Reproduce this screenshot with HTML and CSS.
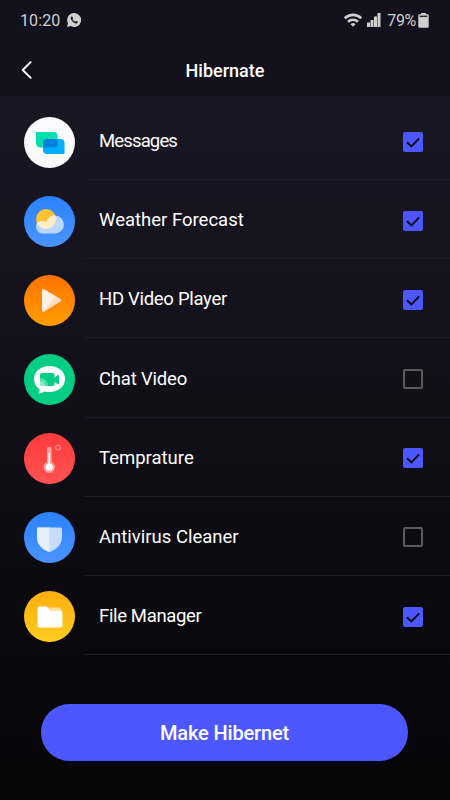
FILE: index.html
```
<!DOCTYPE html>
<html lang="en">
<head>
    <meta charset="UTF-8">
    <meta name="viewport" content="width=device-width, initial-scale=1.0">
    <title>Hibernate</title>
    <link rel="stylesheet" href="styles.css">
</head>
<body>
    <div class="status-bar">
        <span class="time">10:20</span>
        <svg class="chat-status" width="14" height="14" viewBox="0 0 14 14">
            <path d="M7 0a7 7 0 1 1-3.3 13.1L0 14l1-3.7A7 7 0 0 1 7 0z" fill="#cfcfcf"/>
            <path d="M4.400 3.400c-1 .8-.9 2.100 0 3.500 1.200 1.900 2.700 3.200 4.500 3.500 1 .1 1.900-.6 1.900-1.600L9 7.900l-.9.900C6.900 8.300 6 7.400 5.400 6.200l.7-.9-.8-1.900z" fill="#13111c"/>
        </svg>
        <svg class="wifi" width="18" height="14" viewBox="0 0 18 14">
            <g fill="none" stroke="#cfcfcf" stroke-width="2.600">
                <path d="M.8 5.200a11.700 11.700 0 0 1 16.400 0"/>
                <path d="M4 8.700a7.200 7.200 0 0 1 10 0"/>
            </g>
            <path d="M6.500 11.200a3.600 3.600 0 0 1 5 0L9 13.700z" fill="#cfcfcf"/>
        </svg>
        <svg class="signal" width="14" height="14" viewBox="0 0 14 14" fill="#cfcfcf">
            <path d="M0 9.500h3V14H0zM3.500 7h3v7h-3zM7 3.500h3V14H7zM10.500 0h3v14h-3z"/>
        </svg>
        <span class="percent">79%</span>
        <svg class="battery" width="11" height="15" viewBox="0 0 11 15">
            <path d="M3 0h5v1.300h1.500q1.200 0 1.200 1.200v11q0 1.200-1.200 1.200h-8Q.3 14.700.3 13.500v-11q0-1.200 1.200-1.200H3z" fill="#cfcfcf"/>
            <path d="M1.700 2.600h7.600v1.500H1.700z" fill="#2a2831"/>
        </svg>
    </div>

    <header class="header">
        <svg class="back" width="12" height="18" viewBox="0 0 12 18">
            <path d="M9.700 1.200L1.700 9l8 7.900" fill="none" stroke="#fff" stroke-width="1.800" stroke-linecap="round" stroke-linejoin="round"/>
        </svg>
        <h1 class="title">Hibernate</h1>
    </header>

    <main class="content">
        <ul class="app-list">
            <li class="app">
                <svg class="app-icon" viewBox="0 0 51 51">
                    <circle cx="25.500" cy="25.500" r="25.500" fill="#fbfbfd"/>
                    <path d="M13 15h16.500a4 4 0 0 1 4 4v11.500H16.500a4.500 4.500 0 0 1-4.500-4.500V16a1 1 0 0 1 1-1z" fill="#00dfad"/>
                    <path d="M23 22h13.500a4 4 0 0 1 4 4v10a1 1 0 0 1-1 1H23a4 4 0 0 1-4-4v-7a4 4 0 0 1 4-4z" fill="#00adff"/>
                    <path d="M23 22h10.500v4.500a4 4 0 0 1-4 4H19V26a4 4 0 0 1 4-4z" fill="#0080d9"/>
                </svg>
                <div class="app-row">
                    <span class="app-name name-messages">Messages</span>
                    <span class="check checked"><svg viewBox="0 0 20 20"><path d="M4 10.200l4.400 4.200 7.800-8"/></svg></span>
                </div>
            </li>
            <li class="app">
                <svg class="app-icon" viewBox="0 0 51 51">
                    <defs>
                        <linearGradient id="blue" x1="0" y1="0" x2="0" y2="1">
                            <stop offset="0" stop-color="#2b82ff"/>
                            <stop offset="1" stop-color="#4a94ff"/>
                        </linearGradient>
                        <clipPath id="sun"><circle cx="22" cy="23" r="10"/></clipPath>
                    </defs>
                    <circle cx="25.500" cy="25.500" r="25.500" fill="url(#blue)"/>
                    <circle cx="22" cy="23" r="10" fill="#ffc233"/>
                    <path d="M18.500 37.500a6.500 6.500 0 0 1-6.500-6.500c0-4 2.500-6 6.500-6 2 0 3.200.6 4.200.9 1.800-4.500 4.500-6.400 8.300-6.400a9 9 0 0 1 0 18z" fill="#bad7ff"/>
                    <path d="M18.500 37.500a6.500 6.500 0 0 1-6.500-6.500c0-4 2.500-6 6.500-6 2 0 3.200.6 4.200.9 1.800-4.500 4.500-6.400 8.300-6.400a9 9 0 0 1 0 18z" fill="#ffeec5" clip-path="url(#sun)"/>
                </svg>
                <div class="app-row">
                    <span class="app-name name-weather">Weather Forecast</span>
                    <span class="check checked"><svg viewBox="0 0 20 20"><path d="M4 10.200l4.400 4.200 7.800-8"/></svg></span>
                </div>
            </li>
            <li class="app">
                <svg class="app-icon" viewBox="0 0 51 51">
                    <defs>
                        <linearGradient id="orange" x1="0" y1="0" x2="0" y2="1">
                            <stop offset="0" stop-color="#ff7300"/>
                            <stop offset="1" stop-color="#ff9d00"/>
                        </linearGradient>
                    </defs>
                    <circle cx="25.500" cy="25.500" r="25.500" fill="url(#orange)"/>
                    <path d="M18 16.200q0-3 2.700-1.500l15.600 9.100q2.300 1.500 0 3L20.700 36.200Q18 37.700 18 34.700z" fill="#ffdbbd"/>
                    <path d="M18 16.200q0-3 2.700-1.500l10.700 6.300L20 36.500q-2 .8-2-1.800z" fill="#fff0e6"/>
                </svg>
                <div class="app-row">
                    <span class="app-name name-player">HD Video Player</span>
                    <span class="check checked"><svg viewBox="0 0 20 20"><path d="M4 10.200l4.400 4.200 7.800-8"/></svg></span>
                </div>
            </li>
            <li class="app">
                <svg class="app-icon" viewBox="0 0 51 51">
                    <defs>
                        <clipPath id="camera"><rect x="16" y="19" width="14.500" height="13" rx="1.800"/></clipPath>
                    </defs>
                    <circle cx="25.500" cy="25.500" r="25.500" fill="#04ce84"/>
                    <path d="M25.500 12C34.500 12 41 17.500 41 25s-6.500 13-15.500 13c-1.900 0-3.600-.2-5.100-.6-1.800 1.300-3.600 2-5.900 2 .8-1.300 1.200-2.700 1-4.200C12 32.900 10 29.500 10 25c0-7.500 6.500-13 15.500-13z" fill="#fff"/>
                    <rect x="16" y="19" width="14.500" height="13" rx="1.800" fill="#04ce84"/>
                    <path d="M30 24l3.500-2.800q1.500-.8 1.500.6v7.700q0 1.300-1.500.5L30 27.500z" fill="#04ce84"/>
                    <g clip-path="url(#camera)" fill="#fff">
                        <circle cx="16" cy="32" r="8" opacity=".3"/>
                        <circle cx="16" cy="32" r="5" opacity=".35"/>
                    </g>
                </svg>
                <div class="app-row">
                    <span class="app-name name-chat">Chat Video</span>
                    <span class="check"></span>
                </div>
            </li>
            <li class="app">
                <svg class="app-icon" viewBox="0 0 51 51">
                    <defs>
                        <linearGradient id="red" x1="0" y1="0" x2="0" y2="1">
                            <stop offset="0" stop-color="#ff3b3b"/>
                            <stop offset="1" stop-color="#ff5252"/>
                        </linearGradient>
                    </defs>
                    <circle cx="25.500" cy="25.500" r="25.500" fill="url(#red)"/>
                    <path d="M23 16a2.300 2.300 0 0 1 4.600 0v13a5.700 5.700 0 1 1-4.600 0z" fill="#ffa1a1"/>
                    <path d="M24.500 20.500q.8-.9 1.600 0V31h-1.600z" fill="#fff"/>
                    <circle cx="25.300" cy="34" r="3.500" fill="#fff"/>
                    <circle cx="34" cy="14.700" r="2.400" fill="none" stroke="#ffa1a1" stroke-width="1"/>
                </svg>
                <div class="app-row">
                    <span class="app-name name-temp">Temprature</span>
                    <span class="check checked"><svg viewBox="0 0 20 20"><path d="M4 10.200l4.400 4.200 7.800-8"/></svg></span>
                </div>
            </li>
            <li class="app">
                <svg class="app-icon" viewBox="0 0 51 51">
                    <circle cx="25.500" cy="25.500" r="25.500" fill="url(#blue)"/>
                    <path d="M14 15.500h22.500q1.500 0 1.500 1.500v8c0 7.500-5.500 12.500-12.700 15C18.500 37.500 13 32.500 13 25v-8.500q0-1 1-1z" fill="#c6ddff"/>
                    <path d="M14 15.500h11.300V40C18.500 37.500 13 32.500 13 25v-8.500q0-1 1-1z" fill="#e6f0ff"/>
                </svg>
                <div class="app-row">
                    <span class="app-name name-antivirus">Antivirus Cleaner</span>
                    <span class="check"></span>
                </div>
            </li>
            <li class="app">
                <svg class="app-icon" viewBox="0 0 51 51">
                    <defs>
                        <linearGradient id="yellow" x1="0" y1="0" x2="0" y2="1">
                            <stop offset="0" stop-color="#ffae0d"/>
                            <stop offset="1" stop-color="#ffcd20"/>
                        </linearGradient>
                    </defs>
                    <circle cx="25.500" cy="25.500" r="25.500" fill="url(#yellow)"/>
                    <path d="M22 16.500h13.500q1.700 0 1.700 1.700V23H22z" fill="#ffdf94"/>
                    <path d="M15.500 15.500h6.700q.8 0 1.300.7l2.300 3.500h10.700q2 0 2 2v12.800q0 2-2 2h-21q-2 0-2-2v-17q0-2 2-2z" fill="#fff"/>
                </svg>
                <div class="app-row">
                    <span class="app-name name-file">File Manager</span>
                    <span class="check checked"><svg viewBox="0 0 20 20"><path d="M4 10.200l4.400 4.200 7.800-8"/></svg></span>
                </div>
            </li>
        </ul>
        <button class="hibernate-btn">Make Hibernet</button>
    </main>
</body>
</html>
```
FILE: styles.css
```
* {
    box-sizing: border-box;
}
body {
    margin: 0;
    height: 800px;
    overflow: hidden;
    background-color: #070709;
    color: #fff;
    font-family: Roboto, "Liberation Sans", sans-serif;
}
.status-bar {
    display: flex;
    align-items: center;
    height: 40px;
    padding: 0 20px;
    background-color: #13111c;
    color: #cfcfcf;
    font-size: 16px;
}
.time {
    letter-spacing: 0.1px;
}
.chat-status {
    margin-left: 7px;
}
.wifi {
    margin-left: auto;
}
.signal {
    margin-left: 5px;
}
.percent {
    margin-left: 6px;
    letter-spacing: -0.3px;
}
.battery {
    margin-left: 2px;
    margin-right: 1px;
}
.header {
    display: grid;
    grid-template-columns: 24px 1fr 24px;
    align-items: center;
    height: 56px;
    padding: 4px 21px 0 21px;
    background-color: #13111c;
}
.title {
    margin: 0;
    text-align: center;
    font-size: 18px;
    font-weight: 500;
}
.content {
    height: 704px;
    padding-top: 5px;
    background: linear-gradient(#1a1725, #13111b 35%, #0a0a0f 70%, #060607);
}
.app-list {
    list-style: none;
    margin: 0;
    padding: 0;
}
.app {
    display: flex;
    height: 79.17px;
    padding-left: 24px;
}
.app-icon {
    width: 51px;
    height: 51px;
    margin-top: 15.5px;
    margin-right: 9px;
    flex-shrink: 0;
}
.app-row {
    display: flex;
    flex: 1;
    align-items: center;
    justify-content: space-between;
    padding: 3px 27px 0 15px;
    border-bottom: 1px solid #1e1c2b;
}
.app-name {
    font-size: 18.5px;
    line-height: 24px;
    padding-bottom: 1px;
}
.name-messages {
    letter-spacing: -0.85px;
}
.name-player {
    letter-spacing: -0.3px;
}
.name-chat {
    letter-spacing: -0.2px;
}
.name-file {
    letter-spacing: -0.35px;
}
.check {
    width: 20px;
    height: 20px;
    border: 2px solid #5b5b60;
    border-radius: 2px;
}
.checked {
    border: none;
    background-color: #4d57ff;
}
.check svg {
    display: block;
    fill: none;
    stroke: #0c0b17;
    stroke-width: 2;
}
.hibernate-btn {
    display: block;
    width: 367px;
    height: 57px;
    margin: 49px 0 0 41px;
    border: none;
    border-radius: 29px;
    background-color: #4d57ff;
    color: #fff;
    font-family: inherit;
    font-size: 20px;
    font-weight: 500;
    letter-spacing: -0.15px;
}
```
